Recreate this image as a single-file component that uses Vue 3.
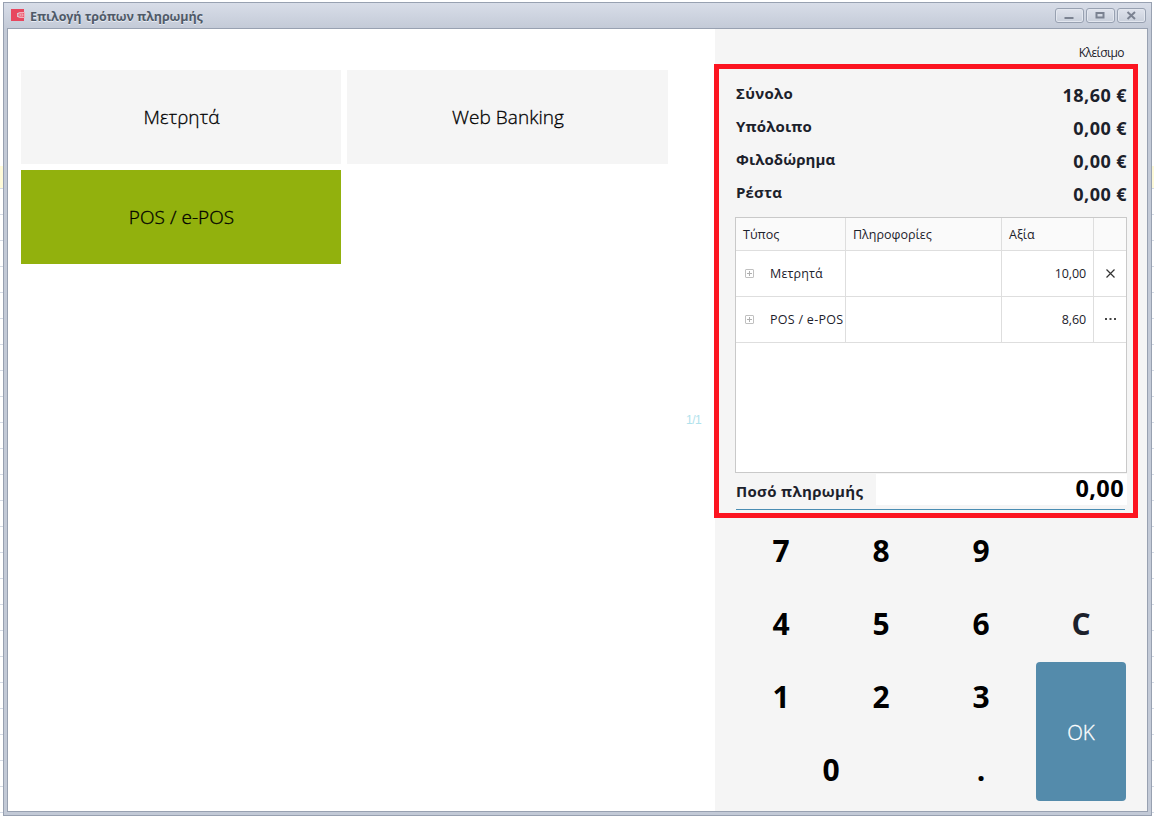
<script setup>
const methods = [
  { name: 'Μετρητά', cls: 'cash' },
  { name: 'Web Banking', cls: 'web' },
  { name: 'POS / e-POS', cls: 'pos' },
]
const totals = [
  { label: 'Σύνολο', value: '18,60 €', cls: 't1' },
  { label: 'Υπόλοιπο', value: '0,00 €', cls: 't2' },
  { label: 'Φιλοδώρημα', value: '0,00 €', cls: 't3' },
  { label: 'Ρέστα', value: '0,00 €', cls: 't4' },
]
const payments = [
  { type: 'Μετρητά', amount: '10,00', action: 'remove' },
  { type: 'POS / e-POS', amount: '8,60', action: 'more' },
]
const keys = ['7', '8', '9', '', '4', '5', '6', 'C', '1', '2', '3']
</script>

<template>
  <div class="desktop">
    <div class="window">
      <header class="titlebar">
        <svg class="logo" width="15" height="13" viewBox="0 0 15 13">
          <path d="M0 0H13V3H9L6 4.2V7.8L9 9H13V12H0Z" fill="#e8475f" />
          <path d="M13.5 3.5H9L6.5 6L9 8.5H13.5Z" fill="#e8475f" stroke="#f3b3bd" stroke-width=".9" />
          <rect x="9" y="5" width="3" height="2" fill="#e8475f" stroke="#f8dde1" stroke-width=".7" />
        </svg>
        <span class="title">Επιλογή τρόπων πληρωμής</span>
        <div class="controls">
          <i><svg width="29" height="15"><path d="M9.5 10H18.5" stroke="#7b8291" stroke-width="2" /></svg></i>
          <i><svg width="29" height="15"><rect x="10.5" y="5" width="7" height="4.5" fill="none" stroke="#7b8291" stroke-width="2" /></svg></i>
          <i><svg width="29" height="15"><path d="M10.5 4L18 11M18 4L10.5 11" stroke="#7b8291" stroke-width="2" /></svg></i>
        </div>
      </header>
      <div class="client">
        <main class="left">
          <div class="methods">
            <div v-for="m in methods" :key="m.name" class="method" :class="m.cls"><span>{{ m.name }}</span></div>
          </div>
          <span class="page">1/1</span>
        </main>
        <aside class="right">
          <div class="close"><span>Κλείσιμο</span></div>
          <section class="summary">
            <div v-for="t in totals" :key="t.label" class="total" :class="t.cls">
              <span class="lbl">{{ t.label }}</span><span class="val">{{ t.value }}</span>
            </div>
            <div class="grid">
              <div class="row head">
                <div><span>Τύπος</span></div><div><span>Πληροφορίες</span></div><div><span>Αξία</span></div><div></div>
              </div>
              <div v-for="p in payments" :key="p.type" class="row">
                <div class="type">
                  <svg width="9" height="9"><rect x=".5" y=".5" width="8" height="8" rx=".5" fill="#fff" stroke="#c0c0c0" /><path d="M2 4.5H7M4.5 2V7" stroke="#b0b0b0" /></svg>
                  <span :class="p.action">{{ p.type }}</span>
                </div>
                <div></div>
                <div class="amount"><span>{{ p.amount }}</span></div>
                <div class="act">
                  <svg v-if="p.action === 'remove'" width="11" height="11"><path d="M1.5 1.5L9.5 9.5M9.5 1.5L1.5 9.5" stroke="#333" stroke-width="1.2" /></svg>
                  <svg v-else width="11" height="11"><path d="M0 5H2M4.5 5H6.5M9 5H11" stroke="#444" stroke-width="2" /></svg>
                </div>
              </div>
            </div>
            <div class="pay">
              <span class="lbl">Ποσό πληρωμής</span>
              <div class="input"><span>0,00</span></div>
            </div>
            <div class="underline"></div>
          </section>
          <section class="keypad">
            <div v-for="(k, i) in keys" :key="i" class="key" :class="{ clear: k === 'C' }">{{ k }}</div>
            <div class="ok"><span>OK</span></div>
            <div class="key zero">0</div>
            <div class="key">.</div>
          </section>
        </aside>
      </div>
    </div>
  </div>
</template>

<style>
body { margin: 0; overflow: hidden; }
</style>
<style scoped>
* { box-sizing: border-box; }
span { white-space: nowrap; }
svg { display: block; }
.desktop {
  width: 1154px; height: 817px; padding: 2px 2px 1px 3px;
  font-family: "Open Sans", "Noto Sans", sans-serif; color: #1c212b;
  background:
    linear-gradient(#fffbd9, #fffbd9) 0 166px / 100% 22px no-repeat,
    linear-gradient(#fff, #fff) 0 0 / 100% 164px no-repeat,
    repeating-linear-gradient(#fff 0 6px, #d5dbe6 6px 7px, #fff 7px 26px);
}
.window {
  width: 1149px; height: 814px; border: 1px solid #98a1b1; display: flex; flex-direction: column;
  padding: 0 3px 3px; background: linear-gradient(#d8dde8 0, #c3cad7 26px, #c3cad7 100%);
}
.titlebar { height: 25px; display: flex; align-items: flex-start; padding: 5px 2px 0 4px; flex: none; }
.logo { margin-top: 1px; }
.title { font-weight: 700; font-size: 12.5px; letter-spacing: -.08px; line-height: 18px; margin-left: 4px; color: #4f5a68; text-shadow: 0 1px 0 #e8ecf3; }
.controls { margin-left: auto; display: flex; gap: 2px; }
.controls i { width: 29px; height: 15px; border: 1px solid #98a1b1; border-radius: 3px; background: linear-gradient(#dfe3ec, #c9cfdb); box-shadow: inset 0 0 0 1px #e3e7ef; }
.controls svg { margin: -1px; }
.client { flex: 1; border: 1px solid #98a1b1; display: flex; background: #fff; min-height: 0; }
.left { width: 707px; display: flex; flex-direction: column; padding: 41px 0 0 13px; }
.methods { display: grid; grid-template-columns: 320px 321px; grid-auto-rows: 94px; gap: 6px; }
.method { background: #f5f5f5; display: flex; align-items: center; justify-content: center; font-size: 19px; font-weight: 300; color: #000; letter-spacing: .06px; padding-left: 1px; -webkit-text-stroke: .3px #000; }
.pos { background: #92b10d; }
.page { margin: 147px 14px 0 auto; font: 12px/18px "Liberation Sans", sans-serif; letter-spacing: -.6px; color: #b0e2ec; }
.right { flex: 1; background: #f5f5f5; }
.close { height: 35px; padding: 15px 23px 0 0; text-align: right; font-size: 12px; line-height: 18px; letter-spacing: -.55px; }
.summary { margin-left: -1px; width: 424px; height: 454px; border: 5px solid #fc1420; padding: 9px 6px 0 16px; }
.total { height: 33px; display: flex; justify-content: space-between; font-weight: 700; }
.lbl { font-size: 15px; line-height: 30px; font-weight: 700; margin-left: 1px; letter-spacing: .15px; }
.t1 .lbl { letter-spacing: .3px; }
.t3 .lbl { letter-spacing: .08px; }
.val { font-size: 18px; line-height: 35px; letter-spacing: .45px; }
.grid { width: 392px; height: 256px; margin-top: 7px; border: 1px solid #c9c9c9; background: #fff; font-size: 12.5px; }
.row { display: grid; grid-template-columns: 110px 156px 92px 32px; height: 46px; border-bottom: 1px solid #dedede; }
.row > div { border-right: 1px solid #dedede; display: flex; align-items: center; }
.row > div:last-child { border-right: 0; }
.head { height: 33px; background: #fafafa; }
.head > div { padding-left: 7px; }
.type svg { margin-left: 9px; }
.type span { margin-left: 16px; letter-spacing: .15px; }
.type .more { letter-spacing: .28px; }
.row .amount { justify-content: flex-end; padding-right: 7px; letter-spacing: -.1px; }
.row .act { padding-left: 11px; }
.pay { display: flex; justify-content: space-between; height: 32px; margin-top: 1px; }
.pay .lbl { line-height: 35px; letter-spacing: .32px; }
.input { width: 251px; height: 31px; background: #fff; display: flex; justify-content: flex-end; padding-right: 3px; color: #000; font-weight: 700; font-size: 23.5px; letter-spacing: .4px; line-height: 28px; }
.underline { height: 1px; background: #4a8db3; margin: 3px 2px 0 1px; }
.keypad { margin: -3px 0 0 16px; width: 400px; display: grid; grid-template-columns: repeat(4, 100px); grid-template-rows: repeat(4, 73px); }
.key { display: flex; align-items: center; justify-content: center; font-size: 30px; line-height: 40px; padding-bottom: 2px; font-weight: 700; color: #000; }
.clear { color: #1c212b; }
.zero { grid-column: 1 / 3; grid-row: 4; }
.ok { grid-column: 4; grid-row: 3 / 5; margin: 1px 5px 6px; height: 139px; background: #548bab; border-radius: 4px; display: flex; align-items: center; justify-content: center; color: #fff; font-size: 20.5px; font-weight: 300; -webkit-text-stroke: .3px #fff; }
</style>
